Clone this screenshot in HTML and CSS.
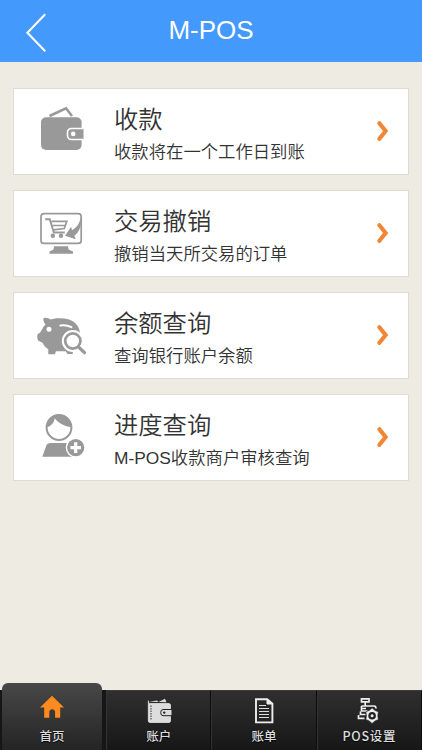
FILE: index.html
```html
<!DOCTYPE html>
<html lang="zh-CN">
<head>
<meta charset="utf-8">
<title>M-POS</title>
<link rel="stylesheet" href="styles.css">
</head>
<body>
<div class="app">
  <header class="header">
    <svg class="back" width="22" height="42" viewBox="25 11 22 42"><path d="M45.2 14.3 27.4 32.7 45.2 51.2" fill="none" stroke="#fff" stroke-width="2.1"/></svg>
    <h1>M-POS</h1>
  </header>
  <main class="list">
    <a class="card">
      <svg class="icon" viewBox="36 101 52 60">
        <path d="M49.5 116 66 108.3 72 116" fill="none" stroke="#999" stroke-width="2.6"/>
        <rect x="41" y="117.2" width="40.6" height="32.8" rx="5" fill="#999"/>
        <path d="M83.5 128.5H71.5a4 4 0 0 0-4 4v3a4 4 0 0 0 4 4h12" fill="#999" stroke="#fff" stroke-width="1.6"/>
        <circle cx="73.2" cy="133.9" r="2.3" fill="#fff"/>
      </svg>
      <div class="text"><h2>收款</h2><p>收款将在一个工作日到账</p></div>
      <svg class="arrow" width="14" height="22" viewBox="0 0 14 22"><path d="M3.4 3.2 9.6 11 3.4 18.8" /></svg>
    </a>
    <a class="card">
      <svg class="icon" viewBox="36 203 52 60">
        <rect x="41" y="213.6" width="40.2" height="29.8" rx="3" fill="#fff" stroke="#999" stroke-width="1.7"/>
        <path d="M54 246.2h14l.6 3.2 4.4 2v2.3H49.5v-2.3l4-2z" fill="#999"/>
        <path d="M45.2 219.2h4.6l4 13.3h11" fill="none" stroke="#999" stroke-width="1.9"/>
        <path d="M51.3 221.3h15.5l-2.5 7.2-11 1.4M52.5 225.5h13" fill="none" stroke="#999" stroke-width="1.7"/>
        <circle cx="52.8" cy="235.8" r="2.2" fill="#999"/><circle cx="61" cy="235.8" r="2.2" fill="#999"/>
        <path d="M80.7 216.5C81.8 226 79.5 232 74.3 235.7l1.5 3.5-10.8-3.4 6.1-9 .9 3.4C77 227.5 80 223 80.7 216.5z" fill="#999"/>
      </svg>
      <div class="text"><h2>交易撤销</h2><p>撤销当天所交易的订单</p></div>
      <svg class="arrow" width="14" height="22" viewBox="0 0 14 22"><path d="M3.4 3.2 9.6 11 3.4 18.8" /></svg>
    </a>
    <a class="card">
      <svg class="icon" viewBox="36 305 52 60">
        <path d="M43.5 318.2c2-1 5 .1 7.2 1.2 5-1.5 12-1.7 17.5-.2 7.3 2 12 8 11.8 15 0 8-3 12-7.2 15v4.8h-5.3l-1.8-2.7H56l-1.2 3h-6.5v-5c-2.4-1.5-4.5-3.8-5.8-6.5L38 340.5c-.9-2.5-.8-6.8 0-6.8 2-.4 3.2-2.7 4.3-4.8.8-1.8 2-3.2 3.2-4.3-1.2-1.7-2.7-4.3-2-6.4z" fill="#999"/>
        <circle cx="49" cy="329.2" r="2.5" fill="#fff"/>
        <path d="M60.4 325.5c4-.7 7.5-.1 11 1.6" fill="none" stroke="#fff" stroke-width="2.1" stroke-linecap="round"/>
        <circle cx="72.8" cy="341" r="11" fill="#fff"/>
        <path d="M78 346.5 84.5 352.8" stroke="#fff" stroke-width="6" stroke-linecap="round"/>
        <circle cx="72.8" cy="341" r="7.6" fill="#fff" stroke="#999" stroke-width="2.7"/>
        <path d="M78.5 347 84.5 352.7" stroke="#999" stroke-width="3.2" stroke-linecap="round"/>
      </svg>
      <div class="text"><h2>余额查询</h2><p>查询银行账户余额</p></div>
      <svg class="arrow" width="14" height="22" viewBox="0 0 14 22"><path d="M3.4 3.2 9.6 11 3.4 18.8" /></svg>
    </a>
    <a class="card">
      <svg class="icon" viewBox="36 407 52 60">
        <circle cx="59" cy="427.5" r="12.4" fill="#fff" stroke="#999" stroke-width="2"/>
        <path d="M46.8 427.3C47.5 419 52 414.4 59 414.4S71 419 71.4 427.3C64.5 426.3 58.5 423.5 54.7 418.3 54 423 51.5 426 46.8 427.3z" fill="#999"/>
        <path d="M50.5 443h18.2L72 456.7H42.3L46.5 445q1-2 4-2z" fill="#999"/>
        <circle cx="75.7" cy="447.6" r="10" fill="#fff"/>
        <circle cx="75.7" cy="447.6" r="8.6" fill="#999"/>
        <path d="M75.7 442.3v10.6M70.4 447.6H81" stroke="#fff" stroke-width="3.2"/>
      </svg>
      <div class="text"><h2>进度查询</h2><p>M-POS收款商户审核查询</p></div>
      <svg class="arrow" width="14" height="22" viewBox="0 0 14 22"><path d="M3.4 3.2 9.6 11 3.4 18.8" /></svg>
    </a>
  </main>
  <nav class="tabs">
    <a class="tab active">
      <svg width="26" height="26" viewBox="39 692 26 26"><path d="M52 694.7 64 706.6h-3.8v10.2h-5.1v-6.4a3 3 0 0 0-5.8 0v6.4h-5.1v-10.2H40z" fill="#ff8a1f"/></svg>
      <span>首页</span>
    </a>
    <a class="tab">
      <svg width="26" height="26" viewBox="147 698 26 26">
        <path d="M150 701.7 158 700.5l1.5 1.5 6.5-3.3 1.5 3.6z" fill="#ddd"/>
        <path d="M149.3 700.5v20.3q0 1.7 1.7 1.7h19q1.5 0 1.5-1.7v-15.6q0-1.7-1.7-1.7h-19.1" fill="#ddd" stroke="#eee" stroke-width=".7"/>
        <path d="M152 705.5v15" stroke="#333" stroke-width="1" stroke-dasharray="1.5 1"/>
        <path d="M173 709.5h-9q-2.3 0-2.3 3.1t2.3 3.1h9z" fill="#ddd" stroke="#222" stroke-width="1"/>
        <circle cx="165.2" cy="712.6" r="1.2" fill="#222"/>
      </svg>
      <span>账户</span>
    </a>
    <a class="tab">
      <svg width="26" height="26" viewBox="251 698 26 26">
        <path d="M256 699.3h11.2l5.2 4.5v18.6H256z" fill="none" stroke="#eee" stroke-width="1.9"/>
        <path d="M267 699v5h5" fill="#eee" stroke="#eee"/>
        <path d="M259 705.5h7m-7 3h10m-10 3h10m-10 3h10m-10 3h10" stroke="#ddd" stroke-width="1"/>
      </svg>
      <span>账单</span>
    </a>
    <a class="tab">
      <svg width="26" height="26" viewBox="356 698 26 26">
        <path d="M361.5 698.8h7.5v3h-7.5zM365.2 702v3.5M361.5 706h12.5q2 0 2 2.5M361.5 706v5h6M366 708.5h-4M360.5 711.5v3h5M358.5 715v3.3h6" fill="none" stroke="#eee" stroke-width="1.7"/>
        <path d="M372.1 708 375 710.4 378.3 711.8 377.8 715.7 378.3 719.5 375 721 372.1 723.4 369.2 721 365.9 719.5 366.4 715.7 365.9 711.8 369.2 710.4z" fill="#eee" stroke="#222" stroke-width=".6"/>
        <circle cx="372.1" cy="715.7" r="3.8" fill="#222"/>
        <circle cx="372.1" cy="715.7" r="1.5" fill="#eee"/>
      </svg>
      <span class="wide">POS设置</span>
    </a>
  </nav>
</div>
</body>
</html>
```

FILE: styles.css
```css
* { box-sizing: border-box; }
body {
  margin: 0;
  background: #eeebe3;
  font-family: "Liberation Sans", "Noto Sans CJK SC", sans-serif;
}
.app {
  display: flex;
  flex-direction: column;
  width: 422px;
  height: 750px;
  overflow: hidden;
}
.header {
  display: grid;
  grid-template-columns: 47px 1fr 47px;
  height: 62px;
  flex: none;
  background: #4499fd;
  color: #fff;
}
.back { margin: 11px 0 0 25px; }
h1 {
  margin: 0;
  font-size: 26px;
  font-weight: 400;
  line-height: 61px;
  text-align: center;
}
.list {
  display: flex;
  flex: 1;
  flex-direction: column;
  gap: 15px;
  padding: 26px 13px 0;
}
.card {
  display: flex;
  align-items: center;
  flex: none;
  height: 87px;
  padding: 0 18px 1px 22px;
  border: 1px solid #dfdbd3;
  background: #fff;
  color: #333;
}
.icon { width: 52px; height: 60px; flex: none; }
.text { flex: 1; margin-left: 26px; padding-top: 8px; }
h2 {
  margin: 0;
  font-size: 24.3px;
  font-weight: 350;
  line-height: 34px;
}
p {
  margin: 0;
  font-size: 17.35px;
  font-weight: 350;
  line-height: 30px;
  white-space: nowrap;
}
.arrow path {
  fill: none;
  stroke: #f08737;
  stroke-width: 4.2;
  stroke-linecap: round;
}
.tabs {
  display: flex;
  align-items: flex-end;
  flex: none;
  height: 67px;
  padding-left: 2px;
  background: linear-gradient(#eeebe3 7px, #161616 7px);
}
.tab {
  display: flex;
  flex-direction: column;
  align-items: center;
  flex: 1;
  height: 60px;
  padding-top: 7px;
  border-left: 1px solid #333;
  border-right: 1px solid #0c0c0c;
  border-top: 1px solid #3c3c3c;
  background: linear-gradient(#2f2f2f, #171717);
  color: #ddd;
  font-size: 12.5px;
  font-weight: 500;
  line-height: 18px;
}
.tab span {
  margin-top: 3px;
  font-family: "Noto Sans CJK SC", sans-serif;
  text-shadow: 0 1px 1px #000;
}
.tab .wide { letter-spacing: .7px; }
.tab.active {
  flex: 0 0 100px;
  height: 67px;
  margin-right: 4px;
  padding-top: 10px;
  border: 0;
  border-radius: 6px 6px 0 0;
  background: linear-gradient(#484848, #242424);
}
.active span { margin-top: 8px; }
```
